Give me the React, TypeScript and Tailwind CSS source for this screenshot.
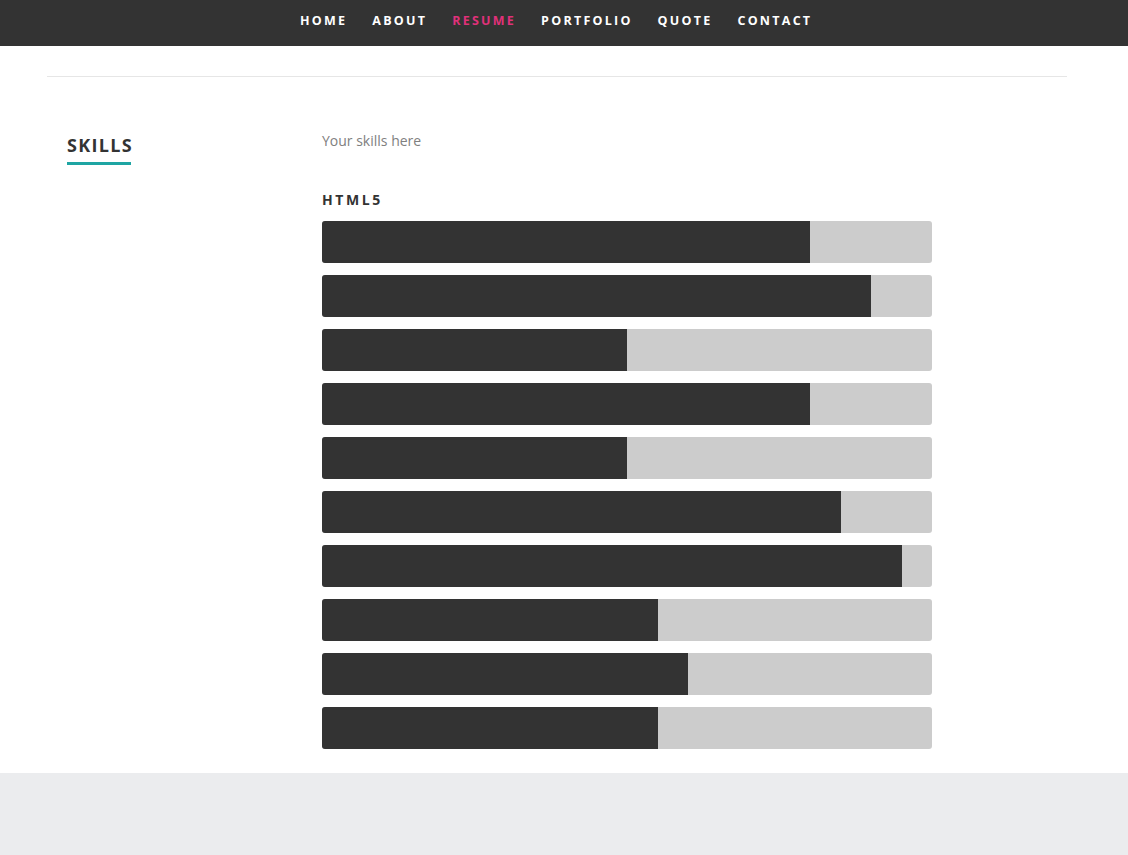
import React from "react";

const nav = ["HOME", "ABOUT", "RESUME", "PORTFOLIO", "QUOTE", "CONTACT"];
const skills = [80, 90, 50, 80, 50, 85, 95, 55, 60, 55];

export default function App() {
  return (
    <div className="w-[1128px] min-h-[855px] bg-white flex flex-col" style={{ fontFamily: "'Open Sans', 'Noto Sans', sans-serif" }}>
      <nav className="h-[46px] bg-[#333333] flex items-center pl-[300px] gap-[25px] pb-[3px]">
        {nav.map((n) => (
          <span
            key={n}
            className={`text-[12.5px] font-bold tracking-[2.25px] leading-none ${n === "RESUME" ? "text-[#e0317a]" : "text-white"}`}
          >
            {n}
          </span>
        ))}
      </nav>
      <div className="px-[47px] pt-[30px]">
        <div className="w-[1020px] h-px bg-[#e6e6e6]" />
      </div>
      <div className="flex pt-[54px] pb-[24px]">
        <div className="w-[322px] pl-[67px] shrink-0 pt-[1px]">
          <h2 className="text-[18px] font-bold tracking-[1.3px] text-[#333] leading-[26px] inline-block">SKILLS</h2>
          <div className="w-[64px] h-[3px] bg-[#1ea5a3] mt-[4px]" />
        </div>
        <div className="w-[610px]">
          <p className="text-[14px] text-[#808080] leading-[22px] -mt-[1px]">Your skills here</p>
          <h3 className="mt-[39px] text-[14px] font-bold tracking-[2.6px] text-[#333] leading-[18px]">HTML5</h3>
          <div className="mt-[12px] flex flex-col gap-[12px]">
            {skills.map((s, i) => (
              <div key={i} className="h-[42px] bg-[#cccccc] rounded-[3px] overflow-hidden">
                <div className="h-full bg-[#333333]" style={{ width: `${s}%` }} />
              </div>
            ))}
          </div>
        </div>
      </div>
      <div className="flex-1 bg-[#ebecee] min-h-[82px]" />
    </div>
  );
}
